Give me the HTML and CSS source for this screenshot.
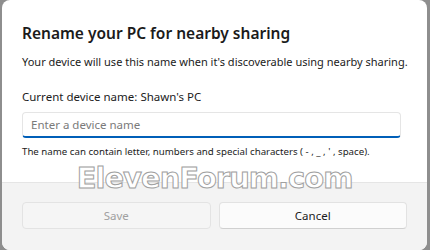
FILE: index.html
```html
<!DOCTYPE html>
<html lang="en">
<head>
  <meta charset="UTF-8" />
  <title>Rename your PC for nearby sharing</title>
  <link rel="stylesheet" href="styles.css">
</head>
<body>
  <div class="dialog">
    <div class="content">
      <h1 class="title">Rename your PC for nearby sharing</h1>
      <p class="desc">Your device will use this name when it's discoverable using nearby sharing.</p>
      <div class="current">Current device name: Shawn's PC</div>
      <input class="name-input" type="text" placeholder="Enter a device name" />
      <p class="hint">The name can contain letter, numbers and special characters ( - , _ , ' , space).</p>
    </div>
    <div class="footer">
      <button class="btn" disabled>Save</button>
      <button class="btn btn-cancel">Cancel</button>
    </div>
    <div class="watermark">ElevenForum.com</div>
  </div>
</body>
</html>
```

FILE: styles.css
```css
html, body {
  margin: 0;
  padding: 0;
  width: 100%;
  height: 100%;
  overflow: hidden;
  background: #8e8e8e;
  font-family: "Noto Sans", "Open Sans", sans-serif;
}

.dialog {
  position: relative;
  margin-left: 2px;
  width: 425px;
  height: 250px;
  background: #fff;
  border-radius: 8px;
  overflow: hidden;
  display: flex;
  flex-direction: column;
}

.content {
  padding: 23px 22px 0 20px;
  flex: 1;
}

.title {
  margin: 0;
  font-size: 15.5px;
  font-weight: 600;
  color: #1b1b1b;
  line-height: 20px;
}

.desc {
  margin: 11px 0 0 0;
  font-size: 11px;
  line-height: 16px;
  color: #1b1b1b;
  white-space: nowrap;
}

.current {
  margin-top: 19px;
  font-size: 11.5px;
  line-height: 16px;
  color: #1b1b1b;
}

.name-input {
  display: block;
  box-sizing: border-box;
  margin-top: 7px;
  width: 379px;
  height: 26px;
  padding: 0 8px;
  border: 1px solid #e5e5e5;
  border-bottom: 2px solid #005fb8;
  border-radius: 4px;
  font-family: inherit;
  font-size: 11.5px;
  outline: none;
}

.name-input::placeholder {
  color: #7a7a7a;
}

.hint {
  margin: 7px 0 0 0;
  font-size: 9.7px;
  line-height: 14px;
  color: #1b1b1b;
  white-space: nowrap;
}

.footer {
  height: 68px;
  box-sizing: border-box;
  background: #f3f3f3;
  border-top: 1px solid #e5e5e5;
  padding: 19px 20px 0 20px;
  display: flex;
  gap: 8px;
}

.btn {
  flex: 1;
  height: 27px;
  border: 1px solid #e3e3e3;
  border-radius: 4px;
  background: #f5f5f5;
  font-family: inherit;
  font-size: 11.5px;
  color: #a0a0a0;
}

.btn-cancel {
  background: #fbfbfb;
  color: #1b1b1b;
  border-color: #e2e2e2;
  border-bottom-color: #d0d0d0;
}

.watermark {
  position: absolute;
  left: 0;
  right: 0;
  top: 162px;
  line-height: 32px;
  text-align: center;
  font-family: "DejaVu Sans", sans-serif;
  font-weight: bold;
  font-size: 29px;
  letter-spacing: -1px;
  color: #fff;
  -webkit-text-stroke: 1px #a0a0a0;
}
```
